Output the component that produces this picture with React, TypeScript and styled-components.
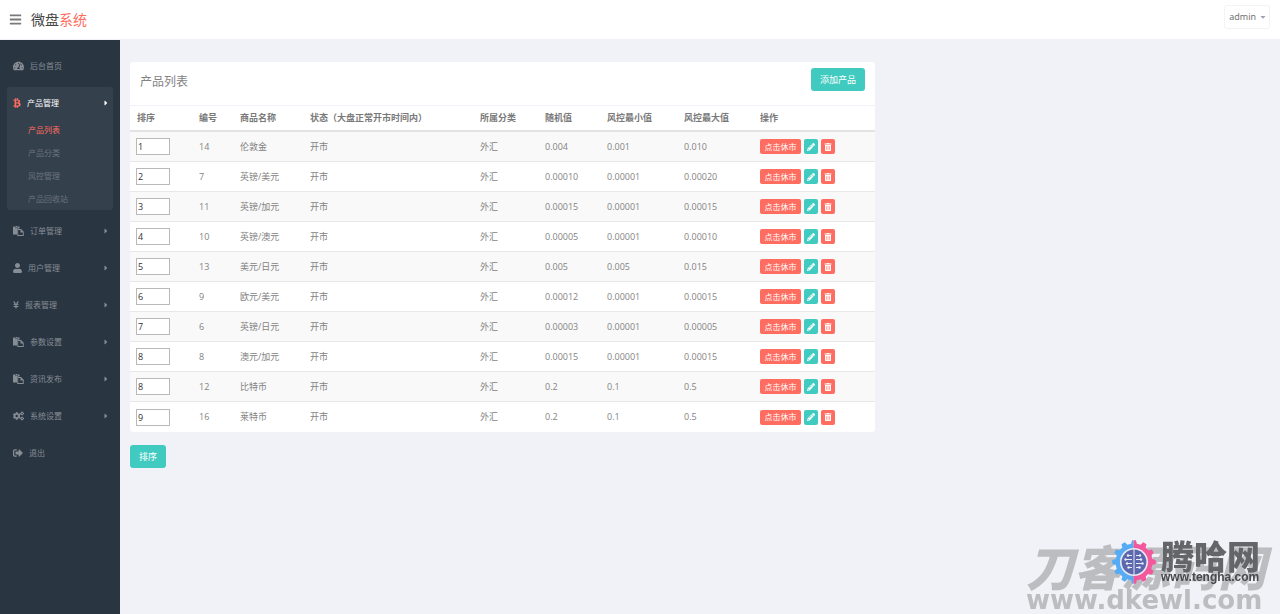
import React from "react";
import styled, { createGlobalStyle, css } from "styled-components";
import {
  FaBars,
  FaBtc,
  FaCaretDown,
  FaCaretRight,
  FaCogs,
  FaPencilAlt,
  FaSignOutAlt,
  FaTachometerAlt,
  FaTrashAlt,
  FaUser,
  FaYenSign,
} from "react-icons/fa";

const GlobalStyle = createGlobalStyle`
  *, *::before, *::after { box-sizing: border-box; }
  body {
    margin: 0;
    background: #f1f2f7;
    color: #838383;
    font: 9px/14px "Open Sans", "Noto Sans CJK SC", sans-serif;
  }
  button, input { font: inherit; margin: 0; }
  button { cursor: pointer; }
  a { color: inherit; text-decoration: none; }
  svg { display: block; flex: none; }
`;

const Page = styled.div`
  display: flex;
  flex-direction: column;
  min-height: 100vh;
`;

const Header = styled.header`
  display: flex;
  align-items: center;
  height: 40px;
  padding: 0 10px 0 9px;
  background: #fff;
  border-bottom: 1px solid #f1f2f7;
`;

const MenuToggle = styled.button`
  display: flex;
  padding: 0;
  border: 0;
  background: none;
  color: #797979;
  font-size: 13px;
`;

const Logo = styled.a`
  margin-left: 9px;
  font-size: 14px;
  line-height: 20px;
  color: #444;

  span { color: #ff6c60; }
`;

const UserButton = styled.button`
  display: flex;
  align-items: center;
  gap: 3px;
  height: 24px;
  margin: 0 0 6px auto;
  padding: 0 2px 0 4px;
  border: 1px solid #f3f3f3;
  border-radius: 3px;
  background: #fff;
  color: #666;

  svg { color: #9aa3b0; font-size: 8px; }
`;

const Body = styled.div`
  display: flex;
  flex: 1;
`;

const Sidebar = styled.nav`
  flex: 0 0 120px;
  padding: 10px 7px;
  background: #2a3542;
  color: #868d95;
  font-size: 8px;
`;

const MenuList = styled.ul`
  display: flex;
  flex-direction: column;
  gap: 5px;
  margin: 0;
  padding: 0;
  list-style: none;
`;

const MenuGroup = styled.li<{ $open?: boolean }>`
  border-radius: 3px;
  ${(p) => p.$open && css`background: #35404d;`}
`;

const MenuLink = styled.a<{ $active?: boolean }>`
  display: flex;
  align-items: center;
  gap: 6px;
  height: 32px;
  padding: 0 3px 0 6px;
  ${(p) => p.$active && css`color: #fff;`}
`;

const MenuIcon = styled.span<{ $width: number; $active?: boolean }>`
  ${(p) => p.$active && css`color: #ff6c60;`}

  svg {
    width: ${(p) => p.$width}px;
    height: 10px;
  }
`;

const MenuCaret = styled(FaCaretRight)`
  margin-left: auto;
  font-size: 8px;
`;

const SubList = styled.ul`
  margin: -1px 0 0;
  padding: 0 0 0 21px;
  list-style: none;
`;

const SubLink = styled.a<{ $active?: boolean }>`
  display: block;
  line-height: 23px;
  color: ${(p) => (p.$active ? "#ff6c60" : "#6a737e")};
`;

const Main = styled.main`
  display: grid;
  flex: 1;
  grid-template-columns: minmax(0, 745fr) minmax(0, 395fr);
  align-content: start;
  padding: 22px 10px;
`;

const ListForm = styled.form`
  display: flex;
  flex-direction: column;
  align-items: flex-start;
  gap: 13px;
`;

const Panel = styled.section`
  width: 100%;
  overflow: hidden;
  border-radius: 3px;
  background: #fff;
`;

const PanelHeader = styled.header`
  display: flex;
  align-items: flex-start;
  justify-content: space-between;
  height: 44px;
  padding: 6px 10px;
  border-bottom: 1px solid #f1f2f7;
`;

const PanelTitle = styled.h1`
  margin: 4px 0 0;
  font-size: 12px;
  font-weight: 400;
  line-height: 20px;
`;

const Button = styled.button`
  height: 23px;
  padding: 0 9px;
  border: 0;
  border-radius: 3px;
  background: #41cac0;
  color: #fff;
`;

const ProductTable = styled.table`
  width: 100%;
  table-layout: fixed;
  border-collapse: separate;
  border-spacing: 0;
`;

const Column = styled.col<{ $width: number }>`
  width: ${(p) => p.$width}px;
`;

const HeadCell = styled.th`
  height: 26px;
  padding: 0 0 0 7px;
  border-bottom: 2px solid #e3e3e3;
  color: #797979;
  font-weight: 700;
  text-align: left;
  white-space: nowrap;
`;

const Row = styled.tr`
  &:nth-child(odd) { background: #f9f9f9; }
  &:not(:last-child) td { border-bottom: 1px solid #e8e8e8; }
`;

const Cell = styled.td`
  height: 30px;
  padding: 0 0 0 7px;
  white-space: nowrap;
`;

const OrderInput = styled.input`
  display: block;
  width: 34px;
  height: 17px;
  margin-left: -1px;
  padding: 0 1px;
  border: 1px solid #b9b9b9;
  background: #fff;
  color: #333;
  line-height: 13px;
`;

const Actions = styled.div`
  display: flex;
  gap: 3px;
`;

const ActionButton = styled.button<{ $tone: "red" | "teal"; $icon?: boolean }>`
  display: flex;
  align-items: center;
  justify-content: center;
  height: 15px;
  width: ${(p) => (p.$icon ? 14 : 41)}px;
  padding: 0;
  border: 0;
  border-radius: 2px;
  background: ${(p) => (p.$tone === "red" ? "#ff6c60" : "#41cac0")};
  color: #fff;
  font-size: 8px;
`;

const Watermark = styled.div`
  position: fixed;
  right: 14px;
  bottom: 1px;
  pointer-events: none;
  white-space: nowrap;
  color: #bcbdc1;
`;

const WatermarkName = styled.div`
  font: italic 900 48px/44px "Noto Sans CJK SC", sans-serif;
`;

const WatermarkUrl = styled.div`
  font: bold 26px/26px "DejaVu Sans", sans-serif;
`;

const Badge = styled.div`
  position: absolute;
  top: -4px;
  right: 6px;
  display: flex;
  align-items: center;
  gap: 5px;
  color: #646569;
`;

const BadgeName = styled.div`
  font: 900 33px/32px "Noto Sans CJK SC", sans-serif;
`;

const BadgeUrl = styled.div`
  color: #48494d;
  font: bold 12px/13px "Liberation Sans", sans-serif;
`;

function PasteIcon() {
  return (
    <svg viewBox="0 0 22 20" fill="currentColor" aria-hidden="true">
      <path d="M1 1h3v2h6V1h3v4H9.500L8 6.500V17H1a1 1 0 0 1-1-1V2a1 1 0 0 1 1-1z" />
      <path d="M5 0h4v2H5z" />
      <path fillRule="evenodd" d="M9.500 6H16l5.500 5.500V19a1 1 0 0 1-1 1h-11a1 1 0 0 1-1-1V7a1 1 0 0 1 1-1zM10.300 7.800v10.400h9.400V13H15V7.800z" />
    </svg>
  );
}

interface MenuEntry {
  label: string;
  icon: React.ComponentType;
  iconWidth: number;
  children?: string[];
  leaf?: boolean;
}

const menu: MenuEntry[] = [
  { label: "后台首页", icon: FaTachometerAlt, iconWidth: 11, leaf: true },
  { label: "产品管理", icon: FaBtc, iconWidth: 8, children: ["产品列表", "产品分类", "风控管理", "产品回收站"] },
  { label: "订单管理", icon: PasteIcon, iconWidth: 11 },
  { label: "用户管理", icon: FaUser, iconWidth: 9 },
  { label: "报表管理", icon: FaYenSign, iconWidth: 6 },
  { label: "参数设置", icon: PasteIcon, iconWidth: 11 },
  { label: "资讯发布", icon: PasteIcon, iconWidth: 11 },
  { label: "系统设置", icon: FaCogs, iconWidth: 11 },
  { label: "退出", icon: FaSignOutAlt, iconWidth: 10, leaf: true },
];

const columns: [string, number][] = [
  ["排序", 62],
  ["编号", 41],
  ["商品名称", 70],
  ["状态（大盘正常开市时间内）", 170],
  ["所属分类", 65],
  ["随机值", 62],
  ["风控最小值", 77],
  ["风控最大值", 76],
  ["操作", 122],
];

const products = [
  ["1", "14", "伦敦金", "0.004", "0.001", "0.010"],
  ["2", "7", "英镑/美元", "0.00010", "0.00001", "0.00020"],
  ["3", "11", "英镑/加元", "0.00015", "0.00001", "0.00015"],
  ["4", "10", "英镑/澳元", "0.00005", "0.00001", "0.00010"],
  ["5", "13", "美元/日元", "0.005", "0.005", "0.015"],
  ["6", "9", "欧元/美元", "0.00012", "0.00001", "0.00015"],
  ["7", "6", "英镑/日元", "0.00003", "0.00001", "0.00005"],
  ["8", "8", "澳元/加元", "0.00015", "0.00001", "0.00015"],
  ["8", "12", "比特币", "0.2", "0.1", "0.5"],
  ["9", "16", "莱特币", "0.2", "0.1", "0.5"],
];

const TEETH = 12;
const gearPoints = Array.from({ length: TEETH }, (_, i) => {
  const step = (Math.PI * 2) / TEETH;
  const at = (offset: number, r: number) => {
    const a = (i + offset) * step - Math.PI / 2;
    return `${(22 + r * Math.cos(a)).toFixed(2)},${(22 + r * Math.sin(a)).toFixed(2)}`;
  };
  return [at(-0.3, 18.5), at(-0.17, 21.8), at(0.17, 21.8), at(0.3, 18.5)].join(" ");
}).join(" ");

function GearLogo() {
  return (
    <svg width="44" height="44" viewBox="0 0 44 44" aria-hidden="true">
      <defs>
        <clipPath id="gear-left"><rect width="21.6" height="44" /></clipPath>
        <clipPath id="gear-right"><rect x="21.6" width="22.4" height="44" /></clipPath>
      </defs>
      <polygon points={gearPoints} fill="#55acf5" clipPath="url(#gear-left)" />
      <polygon points={gearPoints} fill="#f4589c" clipPath="url(#gear-right)" />
      <circle cx="22" cy="22" r="14" fill="#e9eaf3" />
      <circle cx="22" cy="22" r="12.4" fill="#5b68ae" />
      <g stroke="#e9eaf3" strokeWidth="1" fill="none">
        <path d="M22 9v26" />
        <path d="M20 15.500h-4M20 19.500h-6M20 23.500h-5M20 27.500h-4" />
        <path d="M24 15.500h4M24 19.500h5M24 23.500h6M24 27.500h4" />
      </g>
      <g fill="#e9eaf3">
        <circle cx="16" cy="15.500" r="1.200" />
        <circle cx="13.500" cy="19.500" r="1.200" />
        <circle cx="15" cy="23.500" r="1.200" />
        <circle cx="16.500" cy="27.500" r="1.200" />
        <circle cx="28" cy="15.500" r="1.200" />
        <circle cx="29" cy="19.500" r="1.200" />
        <circle cx="30.500" cy="23.500" r="1.200" />
        <circle cx="27.500" cy="27.500" r="1.200" />
      </g>
    </svg>
  );
}

function SidebarMenu() {
  return (
    <Sidebar>
      <MenuList>
        {menu.map(({ label, icon: Icon, iconWidth, children, leaf }) => (
          <MenuGroup key={label} $open={!!children}>
            <MenuLink href="#" $active={!!children}>
              <MenuIcon $width={iconWidth} $active={!!children}><Icon /></MenuIcon>
              {label}
              {!leaf && <MenuCaret />}
            </MenuLink>
            {children && (
              <SubList>
                {children.map((child, i) => (
                  <li key={child}><SubLink href="#" $active={i === 0}>{child}</SubLink></li>
                ))}
              </SubList>
            )}
          </MenuGroup>
        ))}
      </MenuList>
    </Sidebar>
  );
}

function ProductRow({ product }: { product: string[] }) {
  const [order, id, name, random, min, max] = product;
  return (
    <Row>
      <Cell><OrderInput type="text" defaultValue={order} aria-label={`排序 ${name}`} /></Cell>
      <Cell>{id}</Cell>
      <Cell>{name}</Cell>
      <Cell>开市</Cell>
      <Cell>外汇</Cell>
      <Cell>{random}</Cell>
      <Cell>{min}</Cell>
      <Cell>{max}</Cell>
      <Cell>
        <Actions>
          <ActionButton type="button" $tone="red">点击休市</ActionButton>
          <ActionButton type="button" $tone="teal" $icon aria-label="编辑"><FaPencilAlt /></ActionButton>
          <ActionButton type="button" $tone="red" $icon aria-label="删除"><FaTrashAlt /></ActionButton>
        </Actions>
      </Cell>
    </Row>
  );
}

export default function App() {
  return (
    <Page>
      <GlobalStyle />
      <Header>
        <MenuToggle type="button" aria-label="菜单"><FaBars /></MenuToggle>
        <Logo href="#">微盘<span>系统</span></Logo>
        <UserButton type="button">admin<FaCaretDown /></UserButton>
      </Header>
      <Body>
        <SidebarMenu />
        <Main>
          <ListForm onSubmit={(e) => e.preventDefault()}>
            <Panel>
              <PanelHeader>
                <PanelTitle>产品列表</PanelTitle>
                <Button type="button">添加产品</Button>
              </PanelHeader>
              <ProductTable>
                <colgroup>
                  {columns.map(([label, width]) => <Column key={label} $width={width} />)}
                </colgroup>
                <thead>
                  <tr>{columns.map(([label]) => <HeadCell key={label} scope="col">{label}</HeadCell>)}</tr>
                </thead>
                <tbody>
                  {products.map((p) => <ProductRow key={p[1]} product={p} />)}
                </tbody>
              </ProductTable>
            </Panel>
            <Button type="submit">排序</Button>
          </ListForm>
        </Main>
      </Body>
      <Watermark>
        <WatermarkName>刀客源码网</WatermarkName>
        <WatermarkUrl>www.dkewl.com</WatermarkUrl>
        <Badge>
          <GearLogo />
          <div>
            <BadgeName>腾哈网</BadgeName>
            <BadgeUrl>www.tengha.com</BadgeUrl>
          </div>
        </Badge>
      </Watermark>
    </Page>
  );
}
